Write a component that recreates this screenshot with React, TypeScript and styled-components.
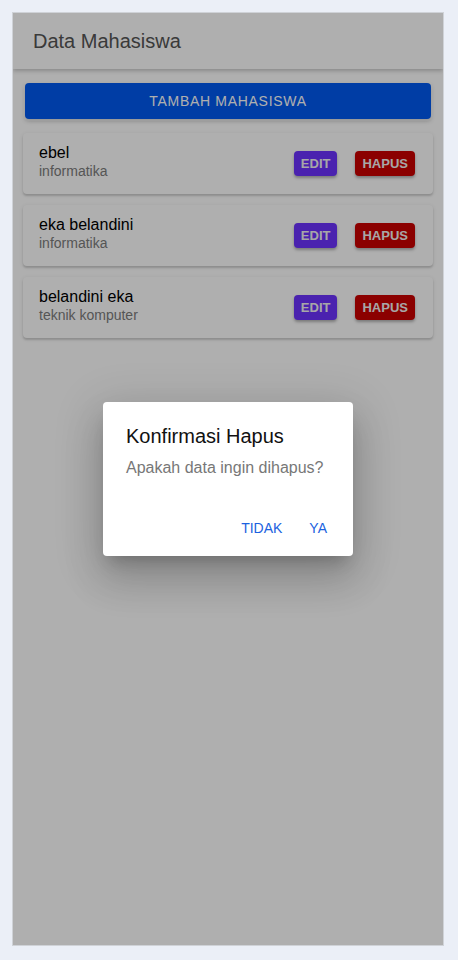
import React from "react";
import styled, { createGlobalStyle } from "styled-components";

const GlobalStyle = createGlobalStyle`
  html, body {
    margin: 0;
    padding: 0;
    background: #ebeff7;
  }
  body {
    font-family: "Liberation Sans", Arial, sans-serif;
  }
  * { box-sizing: border-box; }
`;

const Page = styled.div`
  padding: 12px 0 0 12px;
  height: 960px;
`;

const Frame = styled.div`
  position: relative;
  width: 432px;
  height: 934px;
  background: #ffffff;
  border: 1px solid #cfd2d7;
  overflow: hidden;
`;

const Header = styled.header`
  height: 56px;
  display: flex;
  align-items: center;
  padding-left: 20px;
  background: #ffffff;
  box-shadow: 0 2px 4px rgba(0, 0, 0, 0.22);
  position: relative;
  z-index: 1;
`;

const Title = styled.h1`
  margin: 0;
  font-size: 20px;
  font-weight: 400;
  color: #555555;
`;

const Content = styled.main`
  display: flex;
  flex-direction: column;
  padding: 14px 10px;
`;

const AddButton = styled.button`
  margin: 0 2px 14px;
  height: 36px;
  border: none;
  border-radius: 4px;
  background: #0059f0;
  color: #ffffff;
  font-family: inherit;
  font-size: 14px;
  letter-spacing: 0.7px;
  text-transform: uppercase;
  box-shadow: 0 0 0 2px rgba(255, 255, 255, 0.35), 0 2px 4px rgba(0, 0, 0, 0.25);
`;

const List = styled.div`
  display: flex;
  flex-direction: column;
  gap: 11px;
`;

const Card = styled.div`
  height: 61px;
  display: flex;
  align-items: center;
  justify-content: space-between;
  padding: 0 18px 0 16px;
  background: #ffffff;
  border-radius: 4px;
  box-shadow: 0 2px 2px rgba(0, 0, 0, 0.14), 0 1px 4px rgba(0, 0, 0, 0.1);
`;

const Info = styled.div`
  display: flex;
  flex-direction: column;
  padding-bottom: 3px;
`;

const Name = styled.div`
  font-size: 16px;
  line-height: 18px;
  color: #000000;
`;

const Major = styled.div`
  font-size: 14px;
  line-height: 18px;
  color: #7c7c7c;
`;

const Actions = styled.div`
  display: flex;
  gap: 18px;
`;

const SmallButton = styled.button<{ $tone: "edit" | "delete" }>`
  height: 25px;
  padding: 0 7px;
  border: none;
  border-radius: 4px;
  font-family: inherit;
  font-size: 13px;
  font-weight: 700;
  color: #f4f4f4;
  text-transform: uppercase;
  background: ${(p) => (p.$tone === "edit" ? "#6c32ff" : "#cb0000")};
  box-shadow: 0 2px 3px rgba(0, 0, 0, 0.3);
`;

const Backdrop = styled.div`
  position: absolute;
  inset: 0;
  background: rgba(0, 0, 0, 0.314);
  display: flex;
  align-items: center;
  justify-content: center;
  z-index: 2;
`;

const Dialog = styled.div`
  width: 250px;
  height: 154px;
  background: #ffffff;
  border-radius: 4px;
  padding: 22px 18px 14px 23px;
  display: flex;
  flex-direction: column;
  box-shadow: 0 11px 15px -7px rgba(0, 0, 0, 0.2), 0 24px 38px 3px rgba(0, 0, 0, 0.14),
    0 9px 46px 8px rgba(0, 0, 0, 0.12);
`;

const DialogTitle = styled.h2`
  margin: 0;
  font-size: 20px;
  line-height: 24px;
  font-weight: 400;
  color: #111111;
`;

const DialogText = styled.p`
  margin: 8px 0 0;
  font-size: 16px;
  line-height: 24px;
  color: #777777;
`;

const DialogActions = styled.div`
  margin-top: auto;
  display: flex;
  justify-content: flex-end;
  gap: 11px;
`;

const TextButton = styled.button`
  height: 28px;
  padding: 0 8px;
  border: none;
  background: transparent;
  font-family: inherit;
  font-size: 14px;
  color: #1b62e0;
  text-transform: uppercase;
`;

const students = [
  { name: "ebel", major: "informatika" },
  { name: "eka belandini", major: "informatika" },
  { name: "belandini eka", major: "teknik komputer" },
];

export default function App() {
  return (
    <>
      <GlobalStyle />
      <Page>
        <Frame>
          <Header>
            <Title>Data Mahasiswa</Title>
          </Header>
          <Content>
            <AddButton>Tambah Mahasiswa</AddButton>
            <List>
              {students.map((s) => (
                <Card key={s.name}>
                  <Info>
                    <Name>{s.name}</Name>
                    <Major>{s.major}</Major>
                  </Info>
                  <Actions>
                    <SmallButton $tone="edit">Edit</SmallButton>
                    <SmallButton $tone="delete">Hapus</SmallButton>
                  </Actions>
                </Card>
              ))}
            </List>
          </Content>
          <Backdrop>
            <Dialog>
              <DialogTitle>Konfirmasi Hapus</DialogTitle>
              <DialogText>Apakah data ingin dihapus?</DialogText>
              <DialogActions>
                <TextButton>Tidak</TextButton>
                <TextButton>Ya</TextButton>
              </DialogActions>
            </Dialog>
          </Backdrop>
        </Frame>
      </Page>
    </>
  );
}
